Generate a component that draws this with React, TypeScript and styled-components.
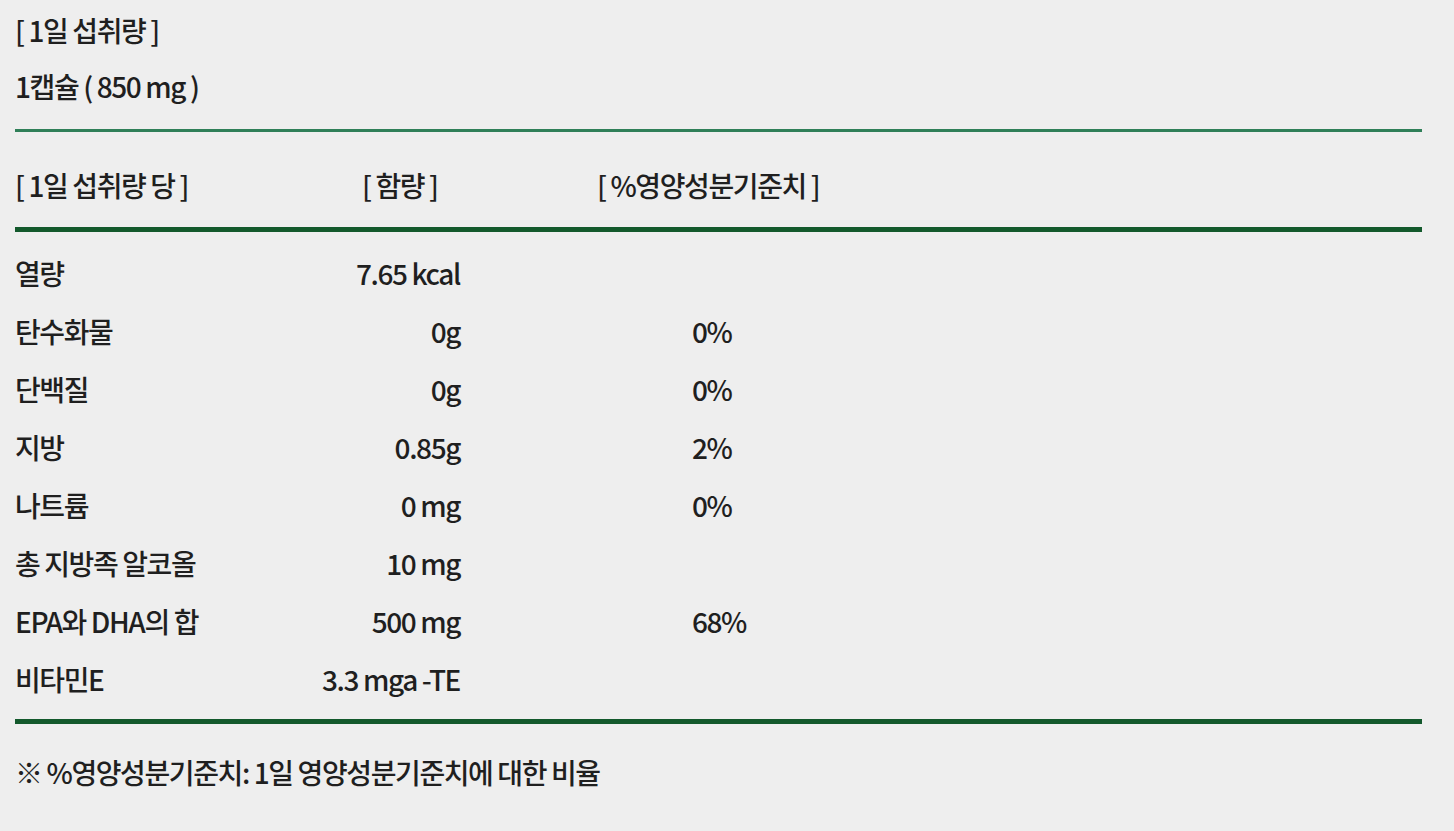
import React from "react";
import styled, { createGlobalStyle } from "styled-components";

const GlobalStyle = createGlobalStyle`
    html, body {
        margin: 0;
        padding: 0;
        background: #eeeeee;
    }
    body {
        font-family: "Noto Sans CJK KR", "Noto Sans", sans-serif;
        color: #1f1f1f;
    }
`;

const Page = styled.section`
    width: 100%;
    min-height: 831px;
    padding: 2px 32px 0 15px;
    box-sizing: border-box;
    display: flex;
    flex-direction: column;
`;

const Line = styled.p`
    margin: 0;
    font-size: 28px;
    line-height: 56px;
    font-weight: 500;
    letter-spacing: -1.4px;
`;

const Spacer = styled.div`
    height: 15px;
`;

const Rule = styled.hr<{ $thick?: boolean }>`
    margin: 0;
    border: none;
    height: ${(p) => (p.$thick ? 5 : 3)}px;
    background: ${(p) => (p.$thick ? "#13592c" : "#2f7f58")};
`;

const HeaderRow = styled.div`
    display: grid;
    grid-template-columns: 347px 235px 1fr;
    padding: 24px 0 13px;
    font-size: 28px;
    line-height: 58px;
    font-weight: 500;
    letter-spacing: -1.4px;
`;

const Table = styled.div`
    display: flex;
    flex-direction: column;
    padding: 12px 0 11px;
`;

const Row = styled.div`
    display: grid;
    grid-template-columns: 300px 145px 1fr;
    height: 58px;
    align-items: center;
    font-size: 28px;
    font-weight: 500;
    letter-spacing: -1.4px;
`;

const Name = styled.span`
    white-space: nowrap;
`;

const Amount = styled.span`
    text-align: right;
    white-space: nowrap;
`;

const Percent = styled.span`
    padding-left: 232px;
    white-space: nowrap;
`;

const Note = styled.p`
    margin: 19px 0 0;
    font-size: 28px;
    line-height: 58px;
    font-weight: 500;
    letter-spacing: -1.4px;
`;

const rows = [
    { name: "열량", amount: "7.65 kcal", percent: "" },
    { name: "탄수화물", amount: "0g", percent: "0%" },
    { name: "단백질", amount: "0g", percent: "0%" },
    { name: "지방", amount: "0.85g", percent: "2%" },
    { name: "나트륨", amount: "0 mg", percent: "0%" },
    { name: "총 지방족 알코올", amount: "10 mg", percent: "" },
    { name: "EPA와 DHA의 합", amount: "500 mg", percent: "68%" },
    { name: "비타민E", amount: "3.3 mga -TE", percent: "" },
];

const App: React.FC = () => (
    <>
        <GlobalStyle />
        <Page>
            <Line>[ 1일 섭취량 ]</Line>
            <Line>1캡슐 ( 850 mg )</Line>
            <Spacer />
            <Rule />
            <HeaderRow>
                <span>[ 1일 섭취량 당 ]</span>
                <span>[ 함량 ]</span>
                <span>[ %영양성분기준치 ]</span>
            </HeaderRow>
            <Rule $thick />
            <Table>
                {rows.map((r) => (
                    <Row key={r.name}>
                        <Name>{r.name}</Name>
                        <Amount>{r.amount}</Amount>
                        <Percent>{r.percent}</Percent>
                    </Row>
                ))}
            </Table>
            <Rule $thick />
            <Note>※ %영양성분기준치: 1일 영양성분기준치에 대한 비율</Note>
        </Page>
    </>
);

export default App;
